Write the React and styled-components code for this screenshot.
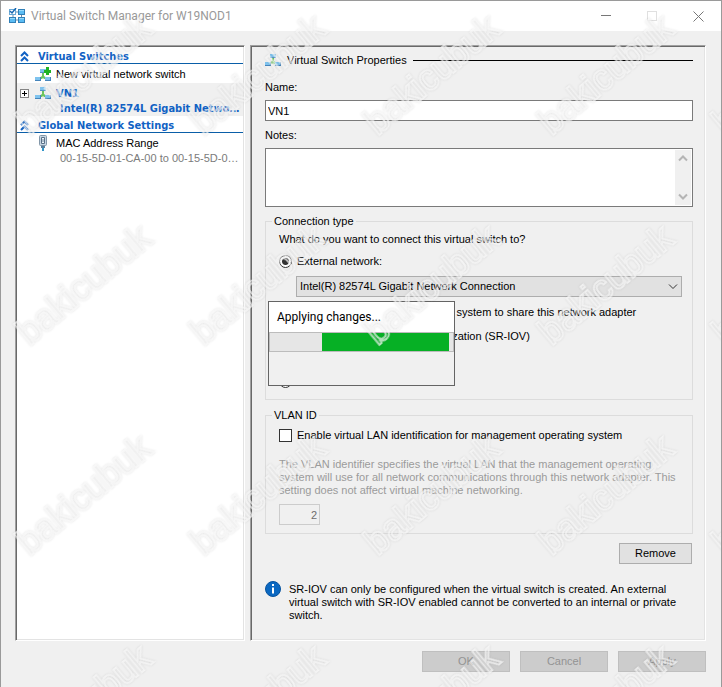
import React from "react";
import styled, { createGlobalStyle, css } from "styled-components";

const uiFont = '"Liberation Sans", Arial, sans-serif';
const strongFont = '"DejaVu Sans Condensed", Tahoma, sans-serif';
const captionFont = 'Roboto, "Segoe UI", sans-serif';

const GlobalStyle = createGlobalStyle`
  *, *::before, *::after { box-sizing: border-box; }
  body { margin: 0; background: #f0f0f0; }
  button, input, textarea, select { font: inherit; color: inherit; margin: 0; border-radius: 0; }
`;

const Dialog = styled.div`
  position: relative;
  display: flex;
  flex-direction: column;
  min-height: 100vh;
  overflow: hidden;
  border: 1px solid #9a9a9a;
  background: #f0f0f0;
  color: #000;
  font: 11px/13px ${uiFont};
`;

const TitleBar = styled.header`
  display: flex;
  align-items: center;
  height: 30px;
  padding: 0 0 0 8px;
  background: #fff;
  color: #999;
`;

const Title = styled.h1`
  flex: 1;
  margin: 0 0 0 5px;
  font: 12px/16px ${captionFont};
`;

const CaptionButton = styled.button`
  display: grid;
  place-items: center;
  width: 46px;
  height: 28px;
  padding: 0;
  border: 0;
  background: none;
`;

const Main = styled.main`
  flex: 1;
  display: grid;
  grid-template-columns: 230px minmax(0, 1fr);
  gap: 5px;
  padding: 14px 15px 10px 14px;
`;

const sunken = css`
  border: 1px solid;
  border-color: #a0a0a0 #fff #fff #a0a0a0;
  box-shadow: inset 1px 1px #696969, inset -1px -1px #e3e3e3;
`;

const Tree = styled.nav`
  ${sunken}
  padding: 1px;
  background: #fff;
`;

const TreeHeading = styled.h2`
  display: flex;
  align-items: center;
  gap: 9px;
  height: 17px;
  margin: 0;
  padding: 2px 3px 0;
  border-bottom: 1px solid #0a5ea8;
  color: #1162c4;
  font: bold 11px/13px ${strongFont};
`;

const TreeItem = styled.div`
  display: grid;
  grid-template-columns: 10px 16px minmax(0, 1fr);
  column-gap: 5px;
  align-items: center;
  align-content: center;
  min-height: 19px;
  padding: 2px 3px 0;
  background: ${(p) => (p.$selected ? "#f0f0f0" : "#fff")};
  color: ${(p) => (p.$selected ? "#1162c4" : "#000")};
  font: ${(p) => (p.$selected ? `bold 11px/15px ${strongFont}` : `11px/15px ${uiFont}`)};
`;

const ItemName = styled.span`
  grid-column: 3;
`;

const ItemDetail = styled.span`
  grid-column: 3;
  padding-left: 4px;
  overflow: hidden;
  white-space: nowrap;
  text-overflow: ellipsis;
  color: ${(p) => (p.$muted ? "#7b7b7b" : "inherit")};
`;

const Expander = styled.button`
  display: grid;
  place-items: center;
  width: 9px;
  height: 9px;
  padding: 0;
  border: 1px solid #848484;
  background: #fff;
`;

const Blank = styled.span``;

const Properties = styled.section`
  ${sunken}
  display: flex;
  flex-direction: column;
  padding: 6px 12px 18px 14px;
`;

const PanelHeading = styled.h2`
  display: flex;
  align-items: center;
  gap: 6px;
  height: 16px;
  margin: 0 0 13px;
  font: 11px/13px ${uiFont};

  &::after {
    content: "";
    flex: 1;
    border-top: 1px solid #000;
  }
`;

const Label = styled.label`
  line-height: 13px;
`;

const NameInput = styled.input`
  height: 21px;
  margin: 6px 0 8px;
  padding: 0 2px;
  border: 1px solid #7a7a7a;
  background: #fff;
`;

const NotesFrame = styled.div`
  display: flex;
  height: 59px;
  margin: 6px 0 14px;
  padding: 1px;
  border: 1px solid #7a7a7a;
  background: #fff;
`;

const NotesInput = styled.textarea`
  flex: 1;
  min-width: 0;
  border: 0;
  padding: 1px;
  resize: none;
`;

const ScrollBar = styled.div`
  display: flex;
  flex-direction: column;
  justify-content: space-between;
  align-items: center;
  width: 16px;
  padding: 5px 0;
  background: #f0f0f0;
`;

const Group = styled.fieldset`
  position: relative;
  display: flex;
  flex-direction: column;
  min-width: 0;
  height: ${(p) => p.$height};
  margin: -6px 0 ${(p) => p.$after};
  padding: 5px 10px 0 13px;
  border: 1px solid #dcdcdc;
`;

const Legend = styled.legend`
  margin-left: -7px;
  padding: 0 2px;
  line-height: 13px;
`;

const Choice = styled.label`
  display: flex;
  align-items: center;
  gap: 5px;
  height: 16px;
  margin: ${(p) => p.$margin || "0"};
  white-space: nowrap;
`;

const Radio = styled.input`
  appearance: none;
  width: 13px;
  height: 13px;
  border: 1px solid #333;
  border-radius: 50%;
  background: #fff;

  &:checked {
    background: radial-gradient(circle, #333 0 3px, #fff 4px);
  }
`;

const CheckBox = styled.input`
  appearance: none;
  width: 13px;
  height: 13px;
  border: 1px solid #333;
  background: #fff;
`;

const SelectFrame = styled.div`
  position: relative;
  display: flex;
  align-items: center;
  margin: 7px 0 7px 17px;

  svg {
    position: absolute;
    right: 4px;
    pointer-events: none;
  }
`;

const AdapterSelect = styled.select`
  appearance: none;
  width: 100%;
  height: 21px;
  padding: 0 20px 0 3px;
  border: 1px solid #adadad;
  background: #e1e1e1;
`;

const Hint = styled.p`
  margin: 15px 0 7px;
  color: #9b9b9b;
  white-space: nowrap;
`;

const VlanInput = styled.input`
  width: 41px;
  height: 21px;
  padding: 0 2px;
  border: 1px solid #ccc;
  background: #f0f0f0;
  color: #6d6d6d;
  text-align: right;
`;

const PushButton = styled.button`
  width: ${(p) => p.$width || "88px"};
  height: 21px;
  padding: 0;
  border: 1px solid #adadad;
  background: #e1e1e1;

  &:disabled {
    border-color: #bfbfbf;
    background: #ccc;
    color: #939393;
  }
`;

const RemoveRow = styled.div`
  display: flex;
  justify-content: flex-end;
  padding-right: 1px;
  margin-bottom: 17px;
`;

const Notice = styled.div`
  display: flex;
  gap: 8px;

  p {
    margin: 2px 0 0;
    white-space: nowrap;
  }
`;

const Footer = styled.footer`
  display: flex;
  justify-content: flex-end;
  gap: 10px;
  padding: 0 15px 15px;
`;

const Popup = styled.div`
  position: absolute;
  top: 73px;
  left: 2px;
  width: 187px;
  height: 85px;
  border: 1px solid #646464;
  background: #f0f0f0;
`;

const PopupText = styled.div`
  height: 30px;
  padding: 0 8px;
  background: #fff;
  font: 12px/30px ${captionFont};
`;

const ProgressTrack = styled.div`
  display: flex;
  height: 20px;
  border: 1px solid #bcbcbc;
  background: #e6e6e6;
`;

const ProgressChunk = styled.div`
  width: 127px;
  margin-left: 52px;
  background: #06b025;
`;

const WatermarkLayer = styled.div`
  position: absolute;
  top: -31px;
  left: -4px;
  display: grid;
  grid-template-columns: repeat(5, 174px);
  grid-auto-rows: 210px;
  pointer-events: none;
`;

const Watermark = styled.span`
  display: grid;
  place-items: center;
  color: transparent;
  font: 36px/40px "Liberation Sans", sans-serif;
  -webkit-text-stroke: 2px rgba(252, 252, 252, 0.7);
  transform: rotate(-40deg);
  filter: drop-shadow(0 0 1px rgba(0, 0, 0, 0.17));
`;

const Chevron = ({ up, color, bold }) => (
  <svg width="10" height="7" viewBox="0 0 10 7" fill="none" stroke={color} strokeWidth={bold ? 2 : 1}>
    <path d={up ? "M1 5.5 5 1.5 9 5.5" : "M1 1.5 5 5.5 9 1.5"} />
  </svg>
);

const Collapse = () => (
  <svg width="9" height="11" viewBox="0 0 9 11" fill="none" stroke="#1162c4" strokeWidth="2">
    <path d="M1 5 4.5 1.5 8 5M1 10 4.5 6.5 8 10" />
  </svg>
);

const SwitchIcon = ({ plus }) => (
  <svg width="16" height="16" viewBox="0 0 16 16">
    <path d="M7 6h2v3l3 2v1H9l-1-1-1 1H4v-1l3-2z" fill="#6cc55f" />
    <path d="M5 2h6v4H5z" fill="#7fc3ee" />
    <path d="M5 5h6v1H5z" fill="#5294c8" />
    <path d="M0 10h6v4H0zM10 10h6v4h-6z" fill="#7fc3ee" />
    <path d="M0 13h6v1H0zM10 13h6v1h-6zM5 10h1v4H5zM15 10h1v4h-1z" fill="#4685bb" />
    {plus && <path d="M11 0h3v3h2v3h-2v2h-3V6H9V3h2z" fill="#1fb325" />}
  </svg>
);

const PlugIcon = () => (
  <svg width="16" height="16" viewBox="0 0 16 16">
    <rect x="4.5" y="0.5" width="7" height="10" rx="1" fill="#c6d5e2" stroke="#8296a8" />
    <path d="M6.5 2.5h3v6h-3z" fill="#eef6fc" stroke="#5b7187" />
    <path d="M8 4v3" stroke="#71869b" />
    <path d="M6 11h4v2H6z" fill="#5a7f9d" />
    <path d="M8 13v3" stroke="#3295c8" strokeWidth="2" />
  </svg>
);

const AppIcon = () => (
  <svg width="17" height="16" viewBox="0 0 17 16">
    <path d="M4 7v3M12.5 6v4M7 4h3M7 12h3" stroke="#6d8ba5" />
    <path d="M9 1h7v6H9zM0 9h7v6H0zM9 9h7v6H9z" fill="#3180b8" />
    <path d="M10 2h5v4h-5zM1 10h5v4H1zM10 10h5v4h-5z" fill="#5bbcf3" />
    <path d="M10 2h5v1h-5zM1 10h5v1H1zM10 10h5v1h-5z" fill="#95d8fa" />
    <rect x="0.5" y="1.5" width="6" height="5" fill="#fff" stroke="#6aa9d6" />
    <path d="m1 3 2 2 4-5" fill="none" stroke="#1767b1" strokeWidth="1.5" />
  </svg>
);

const InfoIcon = () => (
  <svg width="16" height="16" viewBox="0 0 16 16">
    <circle cx="8" cy="8" r="7.5" fill="#0b68c1" stroke="#07539f" />
    <path d="M8 3v2M8 6.5v6" stroke="#fff" strokeWidth="2" />
  </svg>
);

export default function App() {
  return (
    <Dialog>
      <GlobalStyle />
      <TitleBar>
        <AppIcon />
        <Title>Virtual Switch Manager for W19NOD1</Title>
        <CaptionButton aria-label="Minimize">
          <svg width="10" height="10"><path d="M0 4.5h10" stroke="#777" /></svg>
        </CaptionButton>
        <CaptionButton aria-label="Maximize" disabled>
          <svg width="10" height="10"><rect x="0.5" y="0.5" width="9" height="9" fill="none" stroke="#e0e0e0" /></svg>
        </CaptionButton>
        <CaptionButton aria-label="Close">
          <svg width="11" height="11"><path d="m.5.5 10 10m0-10-10 10" stroke="#777" /></svg>
        </CaptionButton>
      </TitleBar>

      <Main>
        <Tree aria-label="Virtual switch settings">
          <TreeHeading><Collapse />Virtual Switches</TreeHeading>
          <TreeItem>
            <Blank />
            <SwitchIcon plus />
            <ItemName>New virtual network switch</ItemName>
          </TreeItem>
          <TreeItem $selected>
            <Expander aria-label="Expand VN1">
              <svg width="7" height="7"><path d="M1 3.5h5M3.5 1v5" stroke="#000" /></svg>
            </Expander>
            <SwitchIcon />
            <ItemName>VN1</ItemName>
            <ItemDetail>Intel(R) 82574L Gigabit Network Connection</ItemDetail>
          </TreeItem>
          <TreeHeading><Collapse />Global Network Settings</TreeHeading>
          <TreeItem>
            <Blank />
            <PlugIcon />
            <ItemName>MAC Address Range</ItemName>
            <ItemDetail $muted>00-15-5D-01-CA-00 to 00-15-5D-01-CA-FF</ItemDetail>
          </TreeItem>
        </Tree>

        <Properties>
          <PanelHeading><SwitchIcon />Virtual Switch Properties</PanelHeading>
          <Label htmlFor="name">Name:</Label>
          <NameInput id="name" defaultValue="VN1" />
          <Label htmlFor="notes">Notes:</Label>
          <NotesFrame>
            <NotesInput id="notes" />
            <ScrollBar>
              <Chevron up bold color="#b5b5b5" />
              <Chevron bold color="#b5b5b5" />
            </ScrollBar>
          </NotesFrame>

          <Group $height="185px" $after="15px">
            <Legend>Connection type</Legend>
            <span>What do you want to connect this virtual switch to?</span>
            <Choice $margin="7px 0 0">
              <Radio type="radio" name="connection" defaultChecked />
              External network:
            </Choice>
            <SelectFrame>
              <AdapterSelect aria-label="External network adapter">
                <option>Intel(R) 82574L Gigabit Network Connection</option>
              </AdapterSelect>
              <Chevron color="#333" />
            </SelectFrame>
            <Choice $margin="0 0 8px 14px">
              <CheckBox type="checkbox" />
              Allow management operating system to share this network adapter
            </Choice>
            <Choice $margin="0 0 6px 14px">
              <CheckBox type="checkbox" />
              Enable single-root I/O virtualization (SR-IOV)
            </Choice>
            <Choice $margin="0 0 7px">
              <Radio type="radio" name="connection" />
              Internal network
            </Choice>
            <Choice>
              <Radio type="radio" name="connection" />
              Private network
            </Choice>
            <Popup role="dialog" aria-label="Applying changes">
              <PopupText>Applying changes...</PopupText>
              <ProgressTrack role="progressbar" aria-label="Applying changes">
                <ProgressChunk />
              </ProgressTrack>
            </Popup>
          </Group>

          <Group $height="125px" $after="9px">
            <Legend>VLAN ID</Legend>
            <Choice>
              <CheckBox type="checkbox" />
              Enable virtual LAN identification for management operating system
            </Choice>
            <Hint>
              The VLAN identifier specifies the virtual LAN that the management operating<br />
              system will use for all network communications through this network adapter. This<br />
              setting does not affect virtual machine networking.
            </Hint>
            <VlanInput aria-label="VLAN identifier" defaultValue="2" disabled />
          </Group>

          <RemoveRow>
            <PushButton $width="73px">Remove</PushButton>
          </RemoveRow>
          <Notice>
            <InfoIcon />
            <p>
              SR-IOV can only be configured when the virtual switch is created. An external<br />
              virtual switch with SR-IOV enabled cannot be converted to an internal or private<br />
              switch.
            </p>
          </Notice>
        </Properties>
      </Main>

      <Footer>
        <PushButton disabled>OK</PushButton>
        <PushButton disabled>Cancel</PushButton>
        <PushButton disabled>Apply</PushButton>
      </Footer>

      <WatermarkLayer aria-hidden="true">
        {Array.from({ length: 20 }, (_, i) => (
          <Watermark key={i}>bakicubuk</Watermark>
        ))}
      </WatermarkLayer>
    </Dialog>
  );
}
